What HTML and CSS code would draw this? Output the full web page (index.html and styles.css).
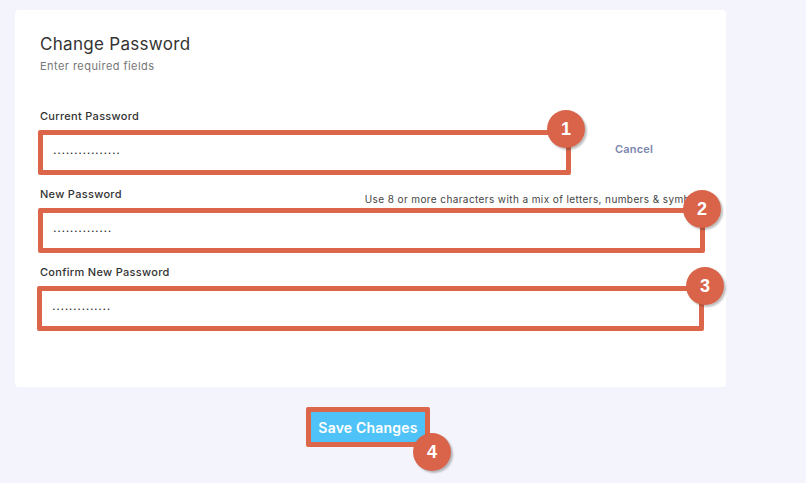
FILE: index.html
```html
<!DOCTYPE html>
<html lang="en">
<head>
    <meta charset="UTF-8">
    <title>Change Password</title>
    <link rel="stylesheet" href="styles.css">
</head>
<body>
    <div class="page">
        <div class="card">
            <h1 class="title">Change Password</h1>
            <p class="subtitle">Enter required fields</p>

            <form class="form">
                <!-- Current password -->
                <div class="group">
                    <div class="label-row">
                        <label for="current">Current Password</label>
                    </div>
                    <div class="row">
                        <div class="field field-short">
                            <input id="current" type="text" value="................" readonly>
                            <span class="marker marker-1">1</span>
                        </div>
                        <a class="cancel" href="#">Cancel</a>
                    </div>
                </div>

                <!-- New password -->
                <div class="group">
                    <div class="label-row">
                        <label for="new">New Password</label>
                        <span class="hint">Use 8 or more characters with a mix of letters, numbers &amp; symbols</span>
                    </div>
                    <div class="field">
                        <input id="new" type="text" value=".............." readonly>
                        <span class="marker marker-2">2</span>
                    </div>
                </div>

                <!-- Confirm password -->
                <div class="group">
                    <div class="label-row">
                        <label for="confirm">Confirm New Password</label>
                    </div>
                    <div class="field field-confirm">
                        <input id="confirm" type="text" value=".............." readonly>
                        <span class="marker marker-3">3</span>
                    </div>
                </div>
            </form>
        </div>

        <div class="actions">
            <div class="save-wrap">
                <button type="button" class="save">Save Changes</button>
                <span class="marker marker-4">4</span>
            </div>
        </div>
    </div>
</body>
</html>
```

FILE: styles.css
```css
body {
    margin: 0;
    background-color: #f4f5fc;
    font-family: Inter, "Open Sans", sans-serif;
    color: #333;
}

.page {
    padding: 10px 15px 40px;
    width: 711px;
}

.card {
    background-color: #fff;
    border-radius: 4px;
    height: 377px;
    box-sizing: border-box;
    padding: 24px 21px 0 23px;
}

.title {
    margin: 0;
    padding-left: 2px;
    font-size: 17px;
    line-height: 20px;
    font-weight: 400;
    letter-spacing: 0.3px;
    color: #333;
}

.subtitle {
    margin: 5px 0 0;
    padding-left: 2px;
    font-size: 11px;
    line-height: 14px;
    letter-spacing: 0.45px;
    color: #777;
}

.form {
    margin-top: 36px;
}

.group + .group {
    margin-top: 12px;
}

.label-row {
    display: flex;
    justify-content: space-between;
    align-items: flex-start;
    height: 14px;
    padding-left: 2px;
}

label {
    font-size: 11px;
    line-height: 14px;
    font-weight: 500;
    letter-spacing: 0.3px;
    color: #333;
}

.hint {
    font-size: 10px;
    line-height: 14px;
    letter-spacing: 0.4px;
    color: #444;
    margin-top: 5px;
    white-space: nowrap;
}

.row {
    display: flex;
    align-items: center;
}

.field {
    position: relative;
    margin-top: 7px;
    height: 45px;
    box-sizing: border-box;
    border: 5px solid #dc664a;
    border-radius: 2px;
    background-color: #fff;
}

.field-short {
    width: 533px;
}

.field-confirm {
    margin-left: -1px;
    margin-right: 1px;
}

.row .field {
    flex: none;
}

.field input {
    width: 100%;
    height: 100%;
    box-sizing: border-box;
    border: none;
    outline: none;
    padding: 0 10px 6px;
    font-family: "Liberation Sans", Arial, sans-serif;
    font-size: 13px;
    letter-spacing: 0.6px;
    color: #222;
    background: transparent;
}

.cancel {
    flex: 1;
    text-align: center;
    padding-right: 8px;
    font-size: 11px;
    font-weight: 600;
    letter-spacing: 0.2px;
    color: #7b86ad;
    text-decoration: none;
}

.marker {
    position: absolute;
    width: 38px;
    height: 38px;
    border-radius: 50%;
    background-color: #d9644a;
    color: #fff;
    font-family: "Liberation Sans", Arial, sans-serif;
    font-weight: bold;
    font-size: 18px;
    line-height: 38px;
    text-align: center;
    box-shadow: 2px 2px 2px rgba(0, 0, 0, 0.25);
    z-index: 2;
}

.marker-1 {
    top: -25px;
    right: -19px;
}

.marker-2 {
    top: -23px;
    right: -21px;
}

.marker-3 {
    top: -24px;
    right: -25px;
}

.marker-4 {
    bottom: -29px;
    right: -26px;
}

.actions {
    display: flex;
    justify-content: center;
    margin-top: 20px;
    padding-right: 5px;
}

.save-wrap {
    position: relative;
    border: 5px solid #dc664a;
    border-radius: 2px;
}

.save {
    display: block;
    width: 114px;
    height: 30px;
    border: none;
    background-color: #4fc3f7;
    color: #fff;
    font-family: Inter, "Open Sans", sans-serif;
    font-size: 14px;
    font-weight: 600;
    letter-spacing: 0.2px;
    padding: 0;
    cursor: pointer;
}
```
